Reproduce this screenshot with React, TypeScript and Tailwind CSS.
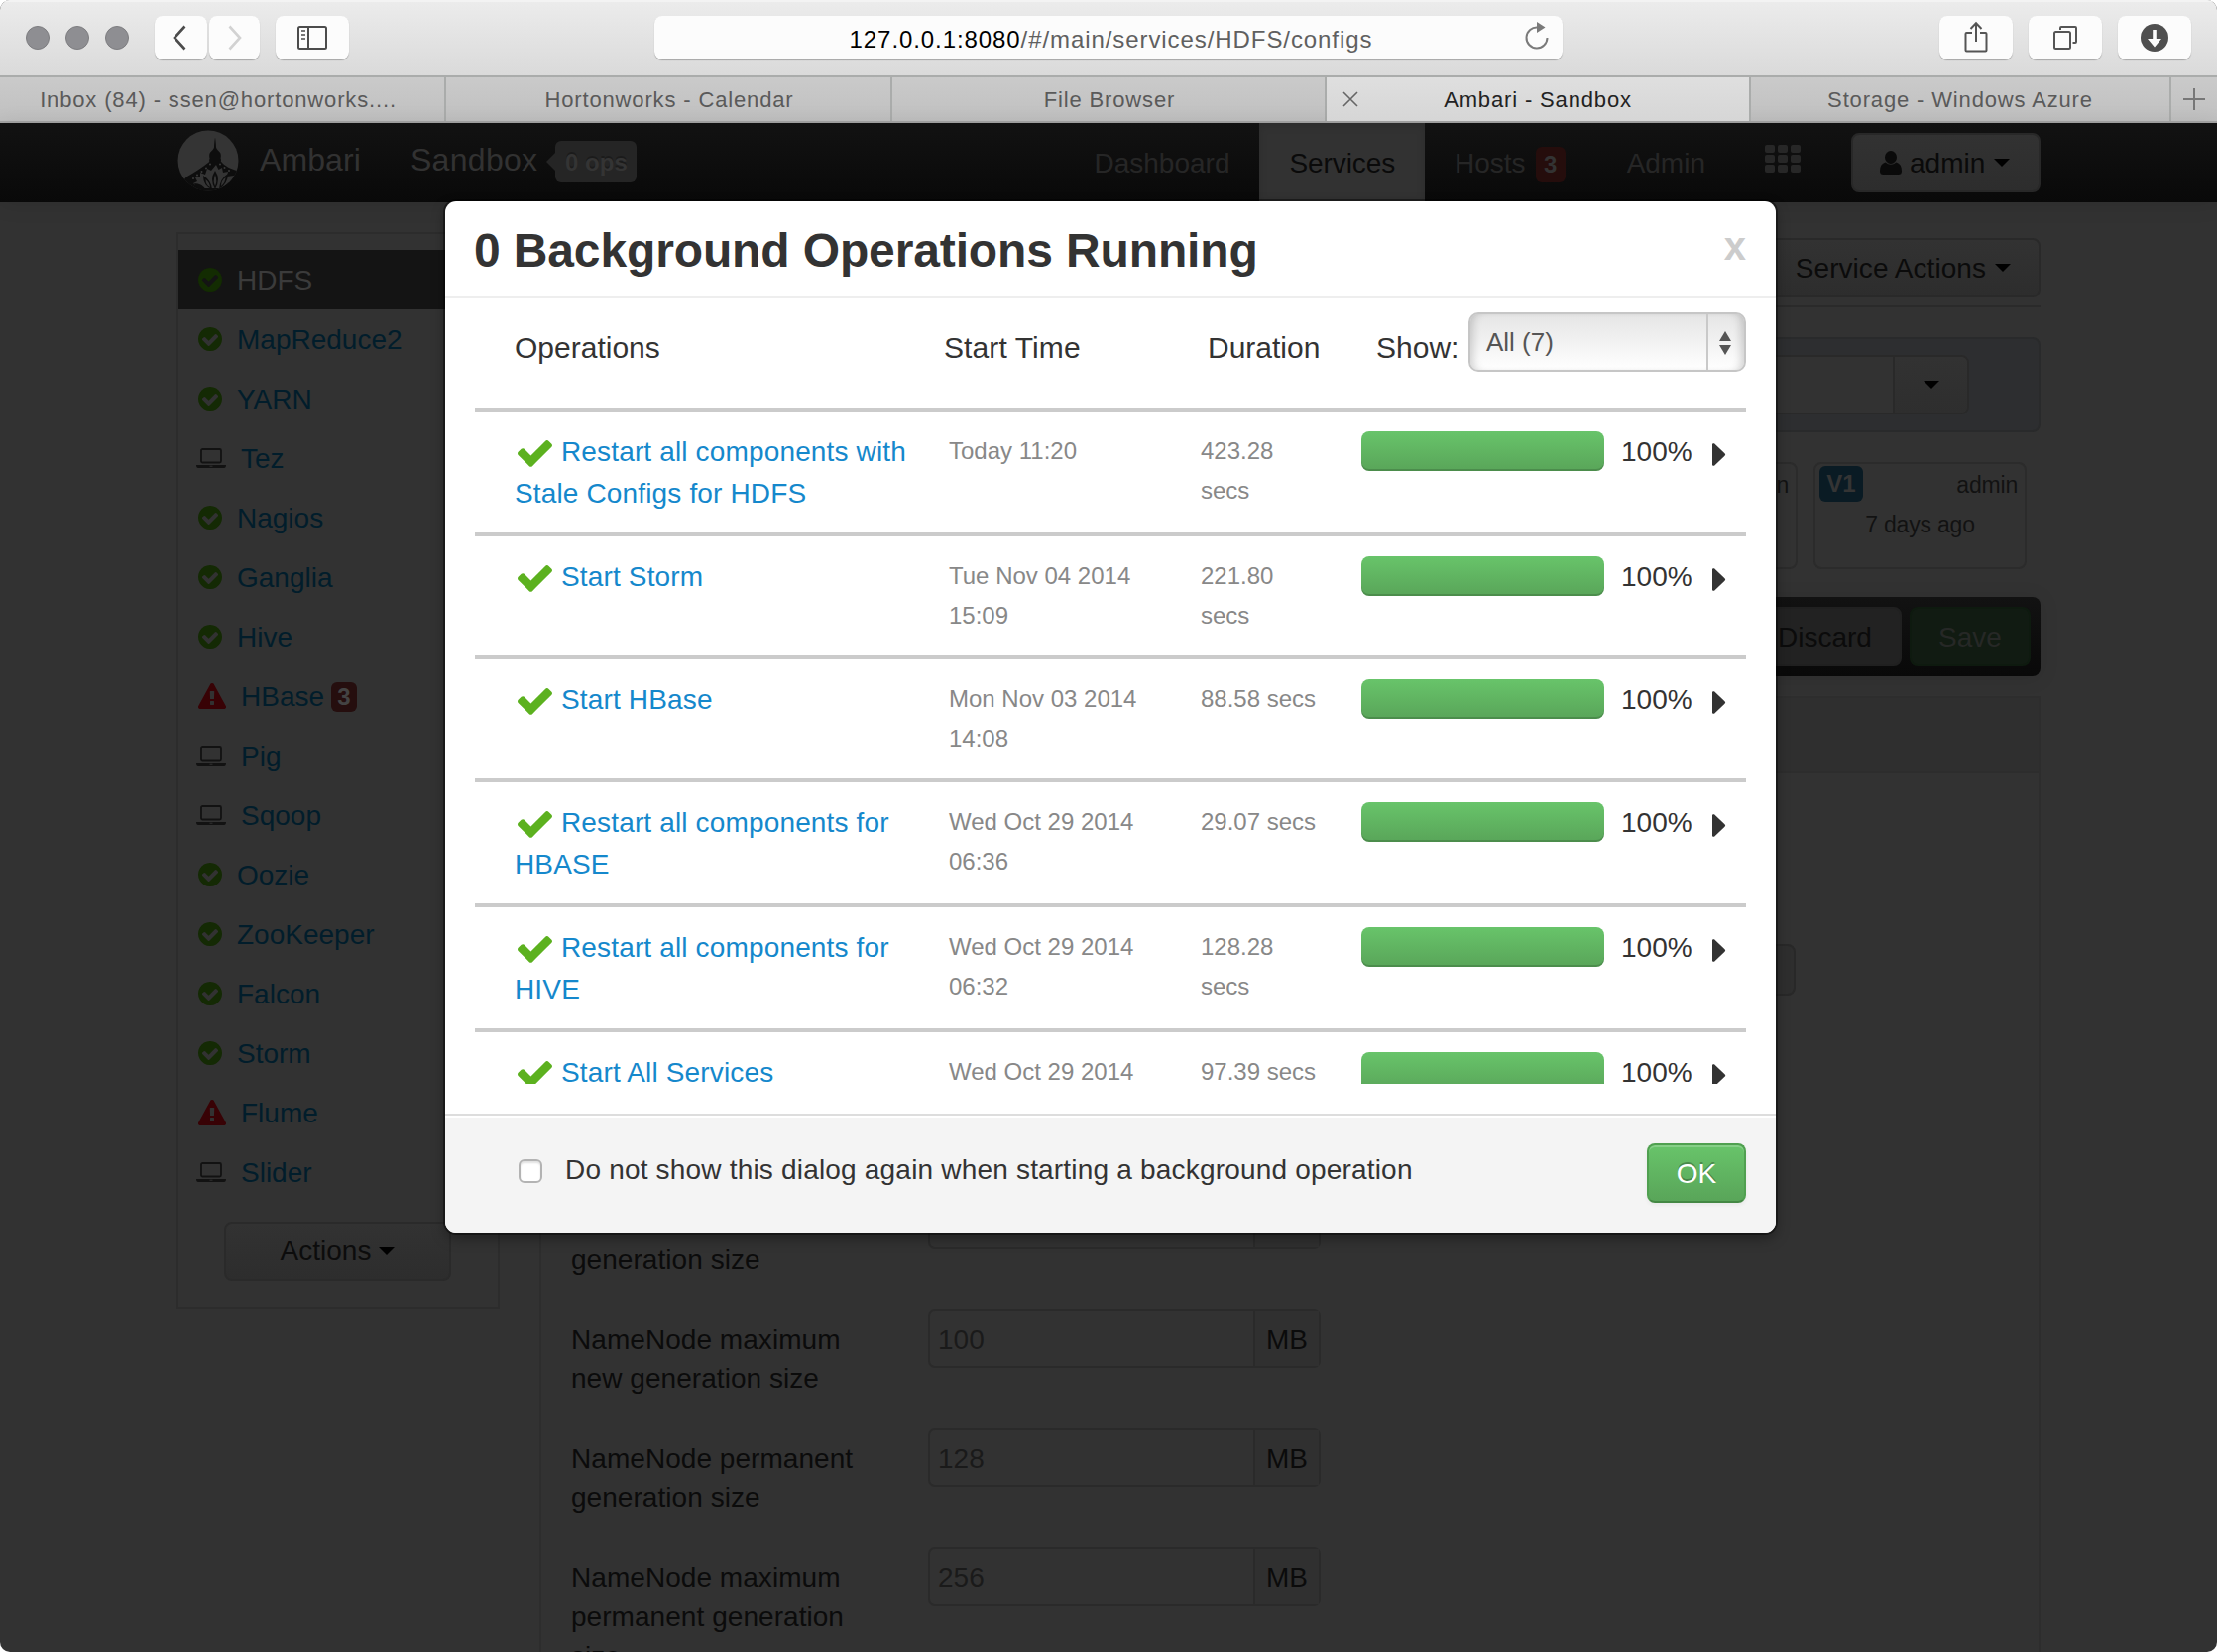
import React from "react";

const CHECK =
  "M1671 566q0 40-28 68l-724 724-136 136q-28 28-68 28t-68-28l-136-136-362-362q-28-28-28-68t28-68l136-136q28-28 68-28t68 28l294 295 656-657q28-28 68-28t68 28l136 136q28 28 28 68z";
const CHECK_CIRCLE =
  "M1412 734q0-28-18-46l-91-90q-19-19-45-19t-45 19l-408 407-226-226q-19-19-45-19t-45 19l-91 90q-18 18-18 46 0 27 18 45l362 362q19 19 45 19 27 0 46-19l543-543q18-18 18-45zm252 162q0 209-103 385.5t-279.5 279.5-385.5 103-385.5-103-279.5-279.5-103-385.5 103-385.5 279.5-279.5 385.5-103 385.5 103 279.5 279.5 103 385.5z";
const WARNING =
  "M1024 1375v-190q0-14-9.5-23.5t-22.5-9.5h-192q-13 0-22.5 9.5t-9.5 23.5v190q0 14 9.5 23.5t22.5 9.5h192q13 0 22.5-9.5t9.5-23.5zm-2-374l18-459q0-12-10-19-13-11-24-11h-220q-11 0-24 11-10 7-10 21l17 457q0 10 10 16.5t24 6.5h185q14 0 23.5-6.5t10.5-16.5zm-14-934l768 1408q35 63-2 126-17 29-46.5 46t-63.5 17h-1536q-34 0-63.5-17t-46.5-46q-37-63-2-126l768-1408q17-31 47-49t65-18 65 18 47 49z";

type Status = "ok" | "client" | "alert";

const services: { name: string; status: Status; alerts?: number; active?: boolean }[] = [
  { name: "HDFS", status: "ok", active: true },
  { name: "MapReduce2", status: "ok" },
  { name: "YARN", status: "ok" },
  { name: "Tez", status: "client" },
  { name: "Nagios", status: "ok" },
  { name: "Ganglia", status: "ok" },
  { name: "Hive", status: "ok" },
  { name: "HBase", status: "alert", alerts: 3 },
  { name: "Pig", status: "client" },
  { name: "Sqoop", status: "client" },
  { name: "Oozie", status: "ok" },
  { name: "ZooKeeper", status: "ok" },
  { name: "Falcon", status: "ok" },
  { name: "Storm", status: "ok" },
  { name: "Flume", status: "alert" },
  { name: "Slider", status: "client" },
];

const operations = [
  { name: "Restart all components with Stale Configs for HDFS", start: "Today 11:20", duration: "423.28 secs", h: "h-[126px]" },
  { name: "Start Storm", start: "Tue Nov 04 2014 15:09", duration: "221.80 secs", h: "h-[124px]" },
  { name: "Start HBase", start: "Mon Nov 03 2014 14:08", duration: "88.58 secs", h: "h-[124px]" },
  { name: "Restart all components for HBASE", start: "Wed Oct 29 2014 06:36", duration: "29.07 secs", h: "h-[126px]" },
  { name: "Restart all components for HIVE", start: "Wed Oct 29 2014 06:32", duration: "128.28 secs", h: "h-[126px]" },
  { name: "Start All Services", start: "Wed Oct 29 2014", duration: "97.39 secs", h: "h-[126px]" },
];

const settings = [
  { label: ["NameNode new", "generation size"], value: "" },
  { label: ["NameNode maximum", "new generation size"], value: "100" },
  { label: ["NameNode permanent", "generation size"], value: "128" },
  { label: ["NameNode maximum", "permanent generation", "size"], value: "256" },
];

function Caret({ className = "" }: { className?: string }) {
  return (
    <span
      className={`inline-block h-0 w-0 shrink-0 border-x-8 border-t-8 border-x-transparent border-t-black ${className}`}
    />
  );
}

/* ---------- Browser chrome ---------- */

const chromeButton =
  "flex h-11 items-center justify-center rounded-[8px] bg-[#fcfcfc] shadow-[0_1px_1px_rgba(0,0,0,0.25)]";

function Toolbar() {
  return (
    <div className="flex h-[78px] shrink-0 items-start border-b-2 border-[#aaacab] bg-gradient-to-b from-[#ececec] to-[#dadada] pt-4 shadow-[inset_0_2px_0_#f3f3f3]">
      <div className="ml-[26px] flex h-11 items-center gap-4">
        <span className="h-6 w-6 rounded-full border border-[#7d7d80] bg-[#8e8e92]" />
        <span className="h-6 w-6 rounded-full border border-[#7d7d80] bg-[#8e8e92]" />
        <span className="h-6 w-6 rounded-full border border-[#7d7d80] bg-[#8e8e92]" />
      </div>
      <div className={`${chromeButton} ml-[26px] w-[53px] pr-[3px]`}>
        <svg width="16" height="26" viewBox="0 0 16 26" fill="none" stroke="#4c4c4c" strokeWidth="2.6">
          <path d="M13.5 1.5 3 13l10.5 11.5" />
        </svg>
      </div>
      <div className={`${chromeButton} ml-0.5 w-[51px]`}>
        <svg width="16" height="26" viewBox="0 0 16 26" fill="none" stroke="#d2d2d2" strokeWidth="2.6">
          <path d="M2.5 1.5 13 13 2.5 24.5" />
        </svg>
      </div>
      <div className={`${chromeButton} ml-4 w-[74px]`}>
        <svg width="30" height="24" viewBox="0 0 30 24" fill="none" stroke="#4c4c4c" strokeWidth="2">
          <rect x="1" y="1" width="28" height="22" rx="1.5" />
          <path d="M11 1v22" />
          <path d="M4 5h4M4 9h4M4 13h4" stroke="#777" />
        </svg>
      </div>
      <div className={`${chromeButton} ml-[308px] w-[916px] text-2xl`}>
        <div className="ml-[44px] flex-1 pt-[3px] text-center leading-10 tracking-[0.92px] text-[#606060]">
          <span className="text-black">127.0.0.1:8080</span>/#/main/services/HDFS/configs
        </div>
        <svg className="mt-[-3px] mr-[13px]" width="26" height="30" viewBox="0 0 26 30" fill="none">
          <path d="M14 5.5A10.5 10.5 0 1 0 23.5 16" stroke="#7a7a7a" strokeWidth="2" />
          <path d="M13 0v11l8.5-5.5z" fill="#7a7a7a" />
        </svg>
      </div>
      <div className={`${chromeButton} ml-[380px] w-[74px]`}>
        <svg width="24" height="32" viewBox="0 0 24 32" fill="none" stroke="#555" strokeWidth="2" className="-mt-0.5">
          <path d="M8 12H2.500q-1 0-1 1v16.500q0 1 1 1h19q1 0 1-1V13q0-1-1-1H16" />
          <path d="M12 21V2.500M6.500 8 12 2.200 17.500 8" />
        </svg>
      </div>
      <div className={`${chromeButton} ml-4 w-[74px]`}>
        <svg width="26" height="26" viewBox="0 0 26 26" fill="none" stroke="#555" strokeWidth="2">
          <rect x="2" y="7" width="16" height="17" rx="1.500" />
          <path d="M8 5V3q0-1 1-1h14q1 0 1 1v14q0 1-1 1h-2.500" />
        </svg>
      </div>
      <div className={`${chromeButton} ml-4 w-[74px]`}>
        <svg width="28" height="28" viewBox="0 0 28 28">
          <circle cx="14" cy="14" r="14" fill="#4f4f4f" />
          <path d="M12.200 6h3.600v9H21l-7 8.500L7 15h5.200z" fill="#fcfcfc" />
        </svg>
      </div>
    </div>
  );
}

function TabBar() {
  const tab =
    "flex items-center justify-center border-r-2 border-[#aaacab] bg-gradient-to-b from-[#cacaca] to-[#c0c0c0]";
  return (
    <div className="flex h-[46px] shrink-0 border-b-2 border-[#a5a5a5] text-[22px] tracking-[0.85px] text-[#5a5a5a]">
      <div className={`${tab} w-[450px] pr-2`}>Inbox (84) - ssen@hortonworks....</div>
      <div className={`${tab} w-[450px] pl-0.5`}>Hortonworks - Calendar</div>
      <div className={`${tab} w-[438px] pl-0.5`}>File Browser</div>
      <div className="relative flex w-[428px] items-center justify-center border-r-2 border-[#aaacab] bg-gradient-to-b from-[#dfdfdf] to-[#d6d6d6] text-[#222]">
        <svg className="absolute top-[14px] left-4" width="16" height="16" viewBox="0 0 16 16" stroke="#666" strokeWidth="1.600">
          <path d="M1 1l14 14M15 1 1 15" />
        </svg>
        Ambari - Sandbox
      </div>
      <div className={`${tab} w-[424px]`}>Storage - Windows Azure</div>
      <div className="flex flex-1 items-center justify-center bg-gradient-to-b from-[#cacaca] to-[#c0c0c0]">
        <svg width="22" height="22" viewBox="0 0 22 22" stroke="#777" strokeWidth="2">
          <path d="M11 0v22M0 11h22" />
        </svg>
      </div>
    </div>
  );
}

/* ---------- Ambari page ---------- */

function AmbariLogo() {
  return (
    <svg width="62" height="62" viewBox="0 0 62 62">
      <defs>
        <clipPath id="disc">
          <circle cx="31" cy="31" r="30.500" />
        </clipPath>
      </defs>
      <g clipPath="url(#disc)">
        <rect width="62" height="62" fill="#343434" />
        <path
          d="M38 7.500c.7 4 .9 7 1 10 .6 2 2.300 3.500 4.200 5.500.8 2 .8 3.500.3 5.500.6 1 .6 2 .2 3 4 5 10 8 18.300 10v22H0v-8c4-2.500 7-5.500 9-8 8-4.500 16-9.500 23.300-15.500-.3-1.500-.2-2.500.3-3.500-.6-2-.6-3.500.2-5.500 1.800-2 3.700-3.500 4.200-5.500.1-3 .3-6 1-10z"
          fill="#0d0d0d"
        />
        <path
          d="M39 35l2.500 5 3.500-2 1 5 5-1-1 5 7-1c-1 7-6 12-12 13H26c-5-1-8-3-10-5l4-2-2-4 5 0 0-5 5 2 2-6 4 2z"
          fill="#343434"
        />
        <path d="M38 41q6 9 0 19-6-10 0-19zM26 46q8 5 9 14-9-3-9-14zM51 44q0 10-9 16 1-11 9-16zM17 54q8 0 12 7-9 1-12-7zM58 51q-4 7-12 9 4-8 12-9z" fill="#0d0d0d" />
        <path d="M38 45q2.500 7 0 12-2.500-5 0-12zM28.500 50q4 3 4.500 8-4.500-2-4.500-8zM48.500 48q0 5-4.500 9 0-6 4.500-9z" fill="#343434" />
        <g fill="#3a3a3a">
          <circle cx="16" cy="49" r="1" />
          <circle cx="20" cy="45.500" r="1" />
          <circle cx="24.500" cy="42" r="1" />
          <circle cx="29" cy="38.500" r="1" />
          <circle cx="33" cy="34.500" r="1" />
          <circle cx="43" cy="34.500" r="1" />
          <circle cx="47.500" cy="38" r="1" />
          <circle cx="52" cy="41" r="1" />
        </g>
      </g>
    </svg>
  );
}

function Navbar() {
  return (
    <div className="flex h-20 shrink-0 justify-center bg-gradient-to-b from-[#121212] to-[#090909] shadow-[0_2px_20px_rgba(0,0,0,0.1)]">
      <div className="flex w-[1880px] items-center text-[28px] leading-none text-[#262626]">
        <div className="-mt-1 ml-px flex items-center text-[32px] text-[#323232]">
          <AmbariLogo />
          <span className="mt-[-3px] ml-[21px] tracking-[0.1px]">Ambari</span>
          <span className="mt-[-3px] ml-[50px] tracking-[0.3px]">Sandbox</span>
        </div>
        <div className="mt-[-3px] ml-[9px] flex items-center">
          <span className="h-0 w-0 border-y-[9px] border-r-[9px] border-y-transparent border-r-[#252525]" />
          <span className="flex h-[42px] w-[82px] items-center justify-center rounded-[6px] bg-[#252525] pt-[3px] text-2xl font-bold text-[#343434] [text-shadow:0_-2px_0_rgba(0,0,0,0.25)]">
            0 ops
          </span>
        </div>
        <div className="ml-auto flex h-20 items-center">
          <span className="px-[30px] pt-px">Dashboard</span>
          <span className="mb-px flex h-[79px] items-center bg-[#323232] px-[30px] pt-0.5 tracking-[-0.1px] text-[#0a0a0a] shadow-[inset_0_3px_8px_rgba(0,0,0,0.12)]">
            Services
          </span>
          <span className="flex items-center pr-8 pl-[30px]">
            <span className="pt-px">Hosts</span>
            <span className="mt-1 ml-[10px] flex h-9 w-[30px] items-center justify-center rounded-[6px] bg-[#250d0c] text-2xl font-bold text-[#333]">
              3
            </span>
          </span>
          <span className="px-[30px] pt-px">Admin</span>
          <span className="mt-[-8px] grid grid-cols-3 gap-x-[3px] gap-y-0.5 px-[30px]">
            {Array.from({ length: 9 }, (_, i) => (
              <span key={i} className="h-2 w-[10px] rounded-[2px] bg-[#272727]" />
            ))}
          </span>
          <span className="ml-[21px] flex h-[60px] w-[191px] items-center rounded-[8px] border-2 border-[#282828] bg-gradient-to-b from-[#323232] to-[#2d2d2d] pl-[27px] text-[#0a0a0a]">
            <svg width="22" height="24" viewBox="0 0 22 24" fill="#0a0a0a">
              <ellipse cx="11" cy="6.500" rx="6" ry="6.500" />
              <path d="M5.500 11.500Q11 16 16.500 11.500 22 13 22 20.500q0 3.500-3.500 3.500h-15Q0 24 0 20.500 0 13 5.500 11.500z" />
            </svg>
            <span className="ml-2 pt-0.5">admin</span>
            <Caret className="ml-[9px]" />
          </span>
        </div>
      </div>
    </div>
  );
}

function StatusIcon({ status, active }: { status: Status; active?: boolean }) {
  if (status === "client")
    return (
      <svg className="mr-[15px] ml-[18px]" width="30" height="20" viewBox="0 0 30 20" fill="none">
        <rect x="5" y="1" width="20" height="13.500" rx="1.500" stroke="#121212" strokeWidth="1.800" />
        <path d="M0 17h30q0 3-2 3H2q-2 0-2-3z" fill="#121212" />
        <path d="M13.500 18.200h3" stroke="#323232" strokeWidth="1" />
      </svg>
    );
  if (status === "alert")
    return (
      <svg className="mr-[15px] ml-5" width="28" height="26" viewBox="0 0 1792 1664" fill="#380205">
        <path d={WARNING} />
      </svg>
    );
  return (
    <svg className="mr-[15px] ml-5" width="24" height="24" viewBox="128 128 1536 1536" fill={active ? "#132c02" : "#142a04"}>
      <path d={CHECK_CIRCLE} />
    </svg>
  );
}

function Sidebar() {
  return (
    <div className="mt-[30px] h-[1086px] w-[326px] shrink-0 border-2 border-[#2c2c2c] pt-4 text-[28px]">
      {services.map((s) => (
        <div
          key={s.name}
          className={`flex h-[60px] items-center ${s.active ? "bg-[#141414] text-[#3b3b3b]" : "text-[#011d2b]"}`}
        >
          <StatusIcon status={s.status} active={s.active} />
          <span className="pt-0.5">{s.name}</span>
          {s.alerts && (
            <span className="mt-0.5 ml-[7px] flex h-[30px] w-[26px] items-center justify-center rounded-[6px] bg-[#250e0e] text-2xl font-bold text-[#434343]">
              {s.alerts}
            </span>
          )}
        </div>
      ))}
      <div className="mt-5 ml-[46px] flex h-[60px] w-[229px] items-center justify-center rounded-[8px] border-2 border-[#2a2a2a] bg-gradient-to-b from-[#323232] to-[#2d2d2d] text-[#0c0c0c]">
        Actions
        <Caret className="ml-2" />
      </div>
    </div>
  );
}

function ConfigContent() {
  return (
    <div className="ml-10 flex w-[1514px] flex-col text-[28px] text-[#0b0b0b]">
      <div className="mt-9 flex h-[60px] justify-end">
        <div className="flex w-[280px] items-center justify-end rounded-[8px] border-2 border-[#292929] bg-gradient-to-b from-[#323232] to-[#2d2d2d] pr-7">
          <span className="pt-px tracking-[0.05px]">Service Actions</span>
          <Caret className="ml-[9px]" />
        </div>
      </div>
      <div className="mt-2 h-0.5 shrink-0 bg-[#2a2a2a]" />
      <div className="mt-[30px] flex h-24 shrink-0 items-start justify-end rounded-[8px] border-2 border-[#292a2b] bg-[#2d2e30] pt-4 pr-[70px]">
        <div className="flex h-[60px] w-[400px] rounded-[8px] border-2 border-[#292929] bg-[#323232]">
          <span className="flex-1" />
          <span className="flex w-[75px] items-center justify-center rounded-r-[6px] border-l-2 border-[#292929] bg-gradient-to-b from-[#323232] to-[#2e2e2e]">
            <Caret />
          </span>
        </div>
      </div>
      <div className="mt-[30px] flex h-[108px] shrink-0 justify-end gap-4 pr-[14px] text-[23px] text-[#121212]">
        {["V2", "V1"].map((v) => (
          <div key={v} className="w-[215px] rounded-[8px] border-2 border-[#2b2b2b] pt-0.5">
            <div className="flex h-9 items-center justify-between pr-[7px] pl-1">
              <span className="flex h-9 w-11 items-center justify-center rounded-[6px] bg-[#0a1b24] text-2xl font-bold text-[#343434]">{v}</span>
              <span className="pt-0.5 tracking-[-0.2px]">admin</span>
            </div>
            <div className="mt-[5px] text-center leading-9 tracking-[-0.2px]">7 days ago</div>
          </div>
        ))}
      </div>
      <div className="mt-7 flex h-20 shrink-0 items-center justify-end gap-2 rounded-[8px] bg-gradient-to-b from-[#121212] to-[#090909] pr-[10px] shadow-[0_2px_20px_rgba(0,0,0,0.1)]">
        <div className="flex h-[60px] w-[155px] items-center justify-center rounded-[8px] border-2 border-[#202020] bg-[#222] pt-px">Discard</div>
        <div className="flex h-[60px] w-[122px] items-center justify-center rounded-[8px] border-2 border-[#0e1a0f] bg-[#111b12] pt-px text-[#262826]">
          Save
        </div>
      </div>
      <div className="mt-5 flex h-[964px] shrink-0 flex-col border-2 border-b-0 border-[#2d2d2d]">
        <div className="h-[76px] shrink-0 border-b-2 border-[#2d2d2d] bg-[#2f2f2f]" />
        <div className="mt-[172px] mr-[245px] h-[52px] w-[280px] shrink-0 self-end rounded-[8px] border-2 border-[#282828] bg-[#2e2e2e]" />
        <div className="mt-[196px] flex shrink-0 flex-col">
          {settings.map((s) => (
            <div key={s.label.join(" ")} className="flex h-[120px] items-start pl-[30px]">
              <div className="mt-[11px] w-[360px] leading-10 tracking-[0.05px]">
                {s.label.map((line) => (
                  <div key={line}>{line}</div>
                ))}
              </div>
              <div className="flex h-[60px] w-[396px] rounded-[7px] border-2 border-[#2a2a2a] leading-[58px]">
                <span className="w-[326px] pl-2 text-[#1a1a1a]">{s.value}</span>
                <span className="flex-1 border-l-2 border-[#2a2a2a] bg-[#303030] text-center">MB</span>
              </div>
            </div>
          ))}
        </div>
      </div>
    </div>
  );
}

/* ---------- Background operations dialog ---------- */

const greenGradient = "bg-gradient-to-b from-[#68c46a] to-[#59a559]";

function OperationsDialog() {
  return (
    <div className="absolute top-[203px] left-[449px] flex h-[1040px] w-[1342px] flex-col overflow-hidden rounded-[11px] bg-white text-[28px] text-[#333] shadow-[0_0_0_2px_rgba(0,0,0,0.4),0_6px_14px_rgba(0,0,0,0.35)]">
      <div className="flex h-[98px] shrink-0 items-center justify-between border-b-2 border-[#eee] pr-[30px] pl-[29px] font-bold">
        <h1 className="pt-[3px] text-[48px] leading-[93px] tracking-[-0.13px]">0 Background Operations Running</h1>
        <span className="mt-[-6px] text-[40px] leading-10 text-[#ccc]">x</span>
      </div>

      <div className="h-[792px] shrink-0 overflow-hidden px-[30px]">
        <div className="grid h-[110px] grid-cols-[433px_266px_170px_93px_280px] items-start pl-10 text-[30px] leading-10">
          <span className="mt-[30px]">Operations</span>
          <span className="mt-[30px] tracking-[0.1px]">Start Time</span>
          <span className="mt-[30px]">Duration</span>
          <span className="mt-[30px]">Show:</span>
          <div className="mt-[14px] flex h-[60px] rounded-[10px] border-2 border-[#c6c6c6] bg-gradient-to-b from-[#e5e5e5] to-white text-[26px] text-[#555] shadow-[inset_8px_0_8px_-5px_rgba(0,0,0,0.17),inset_-8px_0_8px_-5px_rgba(0,0,0,0.17)]">
            <span className="w-[238px] pl-4 leading-[56px]">All (7)</span>
            <span className="flex flex-1 flex-col items-center justify-center gap-1 border-l-2 border-[#c9c9c9] pt-0.5 pr-0.5">
              <span className="h-0 w-0 border-x-[6px] border-b-[10px] border-x-transparent border-b-[#555]" />
              <span className="h-0 w-0 border-x-[6px] border-t-[10px] border-x-transparent border-t-[#555]" />
            </span>
          </div>
        </div>

        {operations.map((op) => (
          <div
            key={op.name}
            className={`grid grid-cols-[438px_254px_162px_245px_auto] items-start border-t-4 border-[#cbcbcb] pt-5 pl-10 ${op.h}`}
          >
            <div className="w-[410px] leading-[42px] tracking-[0.15px] text-[#1588cc]">
              <svg className="mt-[-1px] mr-[9px] ml-[3px] inline-block align-middle" width="35" height="27" viewBox="121 338 1550 1188" fill="#5cb11f">
                <path d={CHECK} />
              </svg>
              {op.name}
            </div>
            <div className="w-[200px] text-2xl leading-10 text-[#888]">{op.start}</div>
            <div className="w-[122px] text-2xl leading-10 text-[#888]">{op.duration}</div>
            <div className={`h-10 rounded-[8px] shadow-[inset_0_-2px_0_rgba(0,0,0,0.15)] ${greenGradient}`} />
            <div className="flex items-start pl-[17px] leading-[42px]">
              100%
              <svg className="mt-[12px] ml-5" width="14" height="23" viewBox="0 0 14 23" fill="#333">
                <path d="M0 1Q0 0 2 0.300L12.500 10.200Q14 11.500 12.500 12.800L2 22.700Q0 23 0 22z" />
              </svg>
            </div>
          </div>
        ))}
      </div>

      <div className="mt-[30px] flex h-[120px] shrink-0 items-start border-t-2 border-[#ddd] bg-[#f4f4f4] pr-[30px] pl-[74px] shadow-[inset_0_2px_0_#fff]">
        <span className="mt-11 h-6 w-6 rounded-[6px] border-2 border-[#b3b3b3] bg-white shadow-[inset_0_2px_2px_rgba(0,0,0,0.12)]" />
        <span className="mt-[35px] ml-[23px] leading-10 tracking-[0.19px]">
          Do not show this dialog again when starting a background operation
        </span>
        <span
          className={`mt-7 ml-auto flex h-[60px] w-[100px] items-center justify-center rounded-[8px] border-2 border-[#50a050] border-b-[#448844] pt-px text-white shadow-[inset_0_2px_0_rgba(255,255,255,0.2),0_2px_4px_rgba(0,0,0,0.05)] [text-shadow:0_-2px_0_rgba(0,0,0,0.25)] ${greenGradient}`}
        >
          OK
        </span>
      </div>
    </div>
  );
}

export default function App() {
  return (
    <div className="h-[1666px] w-[2236px] overflow-hidden bg-white font-['Liberation_Sans',Arial,sans-serif]">
      <div className="relative flex h-full w-full flex-col overflow-hidden rounded-[10px] bg-[#323232]">
        <Toolbar />
        <TabBar />
        <Navbar />
        <div className="flex flex-1 items-start justify-center overflow-hidden">
          <Sidebar />
          <ConfigContent />
        </div>
        <OperationsDialog />
      </div>
    </div>
  );
}
